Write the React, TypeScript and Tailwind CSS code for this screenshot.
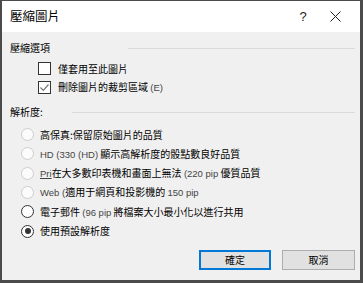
import React from 'react';

const cjk = { fontFamily: '"Noto Sans CJK TC", "Noto Sans", sans-serif' };

function Latin({ children, underline }: { children: React.ReactNode; underline?: boolean }) {
  return (
    <span
      className={`text-[9.5px] text-[#444] ${underline ? 'underline' : ''}`}
      style={{ fontFamily: '"Liberation Sans", Arial, sans-serif' }}
    >
      {children}
    </span>
  );
}

function CheckRow({ checked, children }: { checked?: boolean; children: React.ReactNode }) {
  return (
    <div className="flex items-center h-[19px] pl-[36px]">
      <div className="w-[13px] h-[13px] border border-[#333] bg-white flex items-center justify-center">
        {checked && (
          <svg width="11" height="11" viewBox="0 0 11 11">
            <path d="M1.5 5.5 L4.3 8.3 L9.5 2.5" fill="none" stroke="#777" strokeWidth="1.2" />
          </svg>
        )}
      </div>
      <div className="ml-[7px] text-[10px] text-black leading-none">{children}</div>
    </div>
  );
}

function RadioRow({
  state,
  children,
}: {
  state: 'disabled' | 'off' | 'on';
  children: React.ReactNode;
}) {
  const ring =
    state === 'disabled' ? 'border-[#cdcdcd] bg-[#fbfbfb]' : 'border-[#333] bg-white';
  return (
    <div className="flex items-center h-[19.3px] pl-[19px]">
      <div className={`w-[13px] h-[13px] rounded-full border ${ring} flex items-center justify-center`}>
        {state === 'on' && <div className="w-[6px] h-[6px] rounded-full bg-[#333]" />}
      </div>
      <div className="ml-[6px] text-[10px] text-black leading-none whitespace-nowrap">{children}</div>
    </div>
  );
}

function GroupHeader({ label, lineWidth }: { label: string; lineWidth: number }) {
  return (
    <div className="flex items-center h-[14px] pl-[8px] pr-[5px]">
      <span className="text-[10px] text-black leading-none">{label}</span>
      <div className="ml-auto h-px bg-[#dadada]" style={{ width: lineWidth }} />
    </div>
  );
}

export default function App() {
  return (
    <div className="w-[363px] h-[283px] bg-[#4b4b4b] pl-[2px] pt-[1px] pr-[3px] pb-[3px]" style={cjk}>
      <div className="w-full h-full flex flex-col bg-[#f0f0f0]">
        <div className="h-[31px] bg-white flex items-center pl-[8px]">
          <span className="text-[12.5px] text-black">壓縮圖片</span>
          <span
            className="ml-auto text-[13px] text-[#222] w-[20px] text-center"
            style={{ fontFamily: '"Liberation Sans", Arial, sans-serif' }}
          >
            ?
          </span>
          <div className="w-[45px] flex items-center justify-center mr-[2px]">
            <svg width="11" height="11" viewBox="0 0 11 11">
              <path d="M0.5 0.5 L10.5 10.5 M10.5 0.5 L0.5 10.5" stroke="#222" strokeWidth="1" />
            </svg>
          </div>
        </div>

        <div className="mt-[9px]">
          <GroupHeader label="壓縮選項" lineWidth={227} />
        </div>
        <div className="mt-[4px]">
          <CheckRow>僅套用至此圖片</CheckRow>
          <CheckRow checked>
            刪除圖片的裁剪區域 <Latin>(E)</Latin>
          </CheckRow>
        </div>

        <div className="mt-[8px]">
          <GroupHeader label="解析度:" lineWidth={283} />
        </div>
        <div className="mt-[6px]">
          <RadioRow state="disabled">高保真:保留原始圖片的品質</RadioRow>
          <RadioRow state="disabled">
            <Latin>HD (330 (HD)</Latin> 顯示高解析度的骰點數良好品質
          </RadioRow>
          <RadioRow state="disabled">
            <Latin underline>Pri</Latin>在大多數印表機和畫面上無法 <Latin>(220 pip</Latin> 優質品質
          </RadioRow>
          <RadioRow state="disabled">
            <Latin>Web (</Latin>適用于網頁和投影機的 <Latin>150 pip</Latin>
          </RadioRow>
          <RadioRow state="off">
            電子郵件 <Latin>(96 pip</Latin> 將檔案大小最小化以進行共用
          </RadioRow>
          <RadioRow state="on">使用預設解析度</RadioRow>
        </div>

        <div className="mt-auto mb-[10px] flex justify-end gap-[11px] pr-[5px]">
          <button className="w-[72px] h-[20px] border-2 border-[#0078d7] bg-[#e1e1e1] text-[10px] text-black leading-none">
            確定
          </button>
          <button className="w-[73px] h-[20px] border border-[#adadad] bg-[#e1e1e1] text-[10px] text-black leading-none">
            取消
          </button>
        </div>
      </div>
    </div>
  );
}
